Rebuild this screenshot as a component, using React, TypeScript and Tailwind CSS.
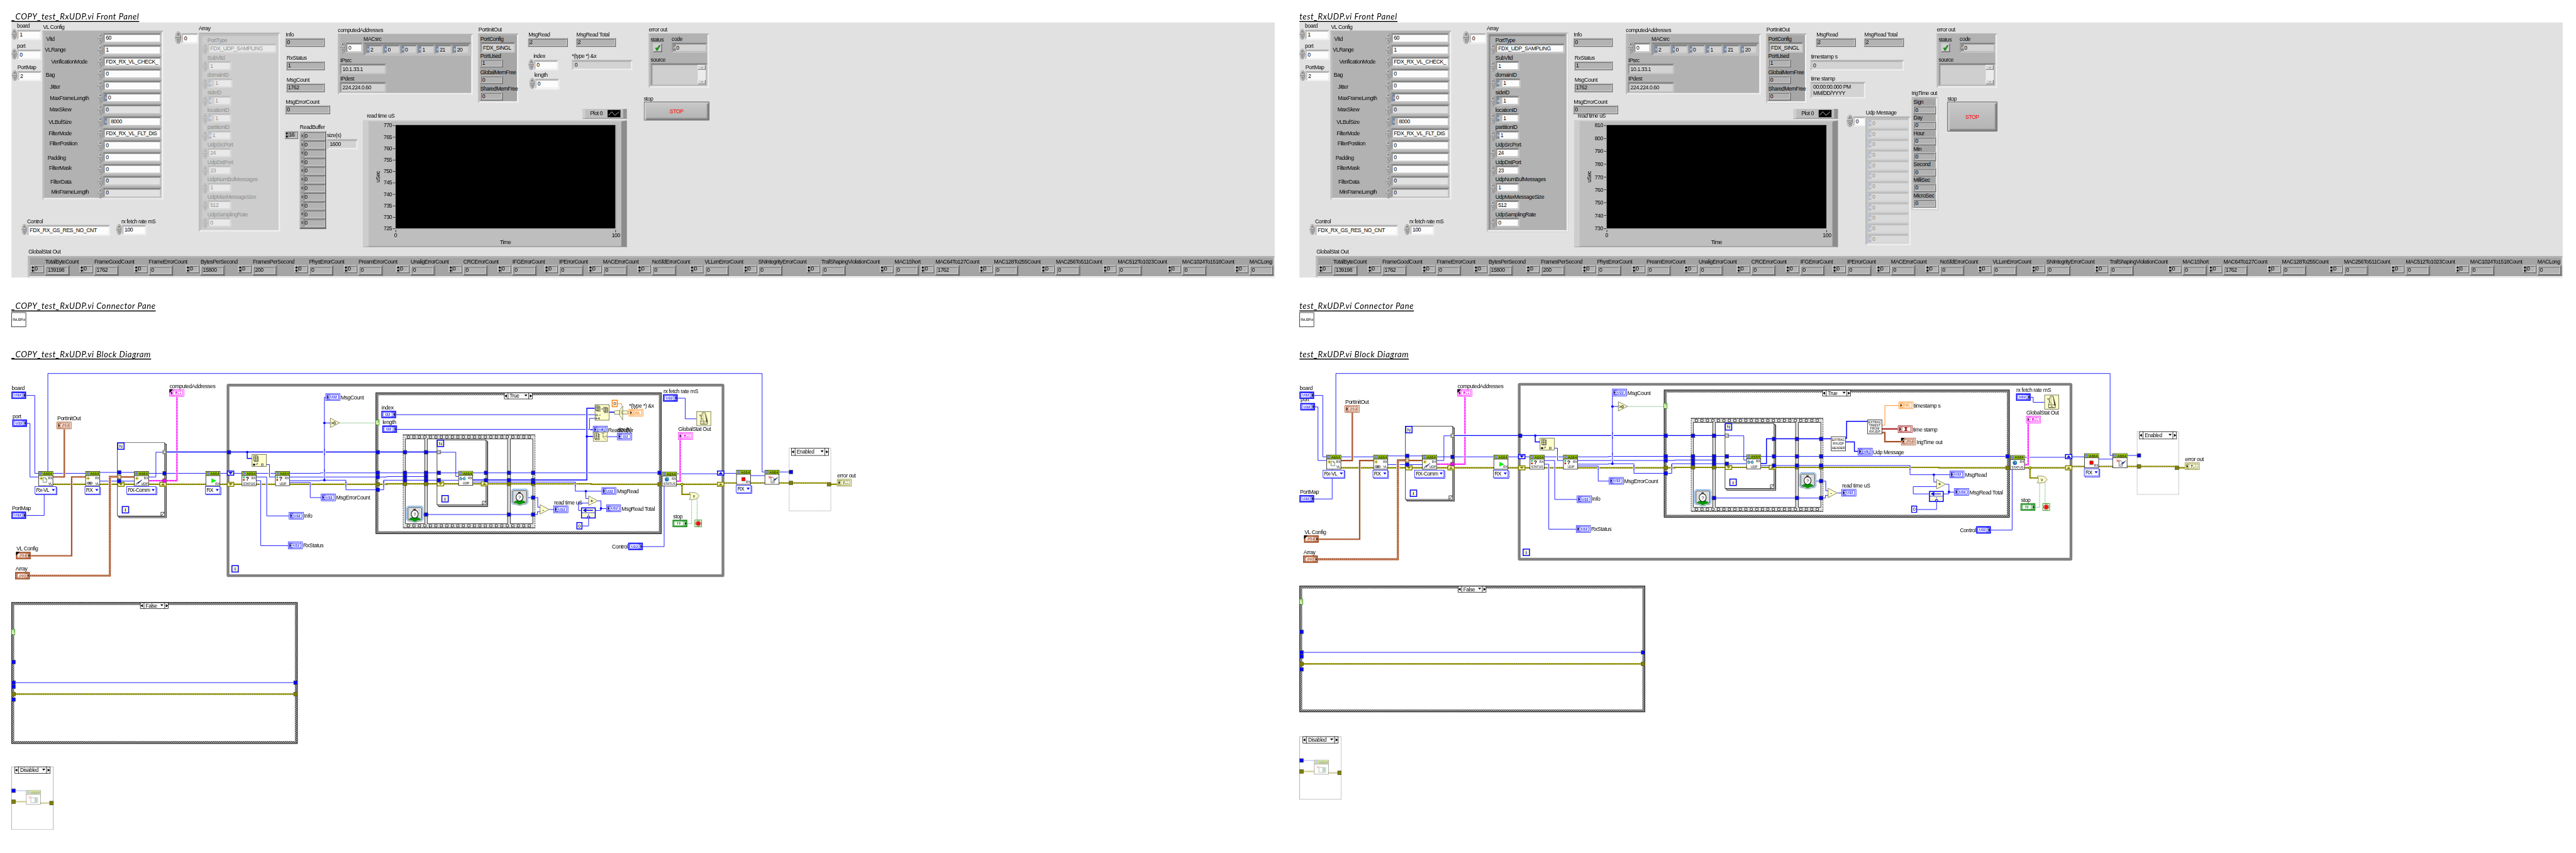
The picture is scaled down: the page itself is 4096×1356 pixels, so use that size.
import { Fragment, type ReactNode } from "react";

/* ---------------------------------------------------------------- */
/* Front panel widgets                                                */
/* ---------------------------------------------------------------- */

function Label({ at, children, dim }: { at: string; children: ReactNode; dim?: boolean }) {
  return (
    <span className={`absolute whitespace-nowrap leading-[14px] ${dim ? "text-[#8f8f8f]" : "text-black"} ${at}`}>
      {children}
    </span>
  );
}

function Spinner({ className = "", dim }: { className?: string; dim?: boolean }) {
  return (
    <svg viewBox="0 0 12 24" preserveAspectRatio="none" className={`shrink-0 ${dim ? "opacity-40" : ""} ${className}`}>
      <ellipse cx="6" cy="12" rx="5.6" ry="11.6" fill="#7d7d7d" />
      <ellipse cx="5.4" cy="11.6" rx="4.8" ry="10.9" fill="#c4c4c4" />
      <path d="M1 11.5h10M1 12.8h10" stroke="#6a6a6a" strokeWidth="0.7" />
      <path d="M4 8.5L6 4L8 8.5" fill="none" stroke="#333" strokeWidth="0.9" />
      <path d="M4 15.5h4L6 20z" fill="#eee" stroke="#333" strokeWidth="0.8" />
    </svg>
  );
}

const frames = {
  panel: "border-t-[#b0b0b0] border-l-[#c4c4c4] border-r-[#efefef] border-b-[#efefef]",
  cluster: "border-t-[#828282] border-l-[#999999] border-r-[#c2c2c2] border-b-[#c2c2c2]",
  dim: "border-t-[#bdbdbd] border-l-[#c6c6c6] border-r-[#d6d6d6] border-b-[#d6d6d6]",
};

const fills = {
  white: "bg-[#fcfcfc]",
  gray: "bg-[#d3d3d3]",
  light: "bg-[#e1e1e1]",
  dim: "bg-[#e9e9e9]",
  faint: "bg-[#dadada]",
};

type FieldProps = {
  at?: string;
  children?: ReactNode;
  frame?: keyof typeof frames;
  fill?: keyof typeof fills;
  radix?: string;
  gap?: boolean;
};

function Field({ at = "", children, frame = "panel", fill = "white", radix, gap }: FieldProps) {
  const dim = frame === "dim";
  return (
    <div className={`flex items-stretch border-4 border-r-[3px] border-b-[3px] ${frames[frame]} ${fills[fill]} ${at}`}>
      {radix && (
        <span
          className={`-ml-px flex w-[6px] shrink-0 items-center justify-center text-[8px] text-white ${dim ? "bg-[#b4bccb]" : "bg-[#7688a6]"}`}
        >
          {radix}
        </span>
      )}
      {gap && <span className={`w-[6px] shrink-0 ${dim ? "bg-[#d0d0d0]" : "bg-[#b8b8b8]"}`} />}
      <span className={`flex items-center whitespace-nowrap pl-[2px] leading-[13px] ${dim ? "text-[#8f8f8f]" : "text-black"}`}>
        {children}
      </span>
    </div>
  );
}

function Indicator({ at = "", children }: { at?: string; children: ReactNode }) {
  return (
    <div className={`border border-t-[#d6d6d6] border-l-[#d6d6d6] border-r-[#4d4d4d] border-b-[#4d4d4d] bg-[#a6a6a6] p-px ${at}`}>
      <div className="flex h-full items-center border border-t-[#505050] border-l-[#505050] border-r-[#dcdcdc] border-b-[#dcdcdc] bg-[#b3b3b3] pl-px leading-[13px]">
        {children}
      </div>
    </div>
  );
}

function IndexBox({ at = "", children }: { at?: string; children: ReactNode }) {
  return (
    <div className={`flex h-[17px] w-[29px] items-stretch border border-t-[#d6d6d6] border-l-[#d6d6d6] border-r-[#4d4d4d] border-b-[#4d4d4d] bg-[#b3b3b3] ${at}`}>
      <svg viewBox="0 0 7 15" className="w-[7px] shrink-0">
        <path d="M3.5 1L6.5 5H4.6V6.5H2.4V5H.5zM3.5 14L.5 10H2.4V8.5H4.6V10H6.5z" fill="#000" />
      </svg>
      <span className="my-px mr-px flex flex-1 items-center border border-t-[#505050] border-l-[#505050] border-r-[#dcdcdc] border-b-[#dcdcdc] leading-[13px]">
        {children}
      </span>
    </div>
  );
}

function Cluster({ at, children, fill = "bg-[#b2b2b2]" }: { at: string; children?: ReactNode; fill?: string }) {
  return (
    <div className={`absolute border-4 border-t-[#b3b3b3] border-l-[#bdbdbd] border-r-[#efefef] border-b-[#efefef] ${fill} ${at}`}>
      {children}
    </div>
  );
}

type VlRow = { at: string; name: string; value: string; fill?: keyof typeof fills; radix?: string; gap?: boolean };

const vlRows: VlRow[] = [
  { at: "left-[4px] top-[7px]", name: "VlId", value: "60" },
  { at: "left-px top-[30px]", name: "VLRange", value: "1" },
  { at: "left-[15px] top-[57px]", name: "VerificationMode", value: "FDX_RX_VL_CHECK_" },
  { at: "left-[3px] top-[86px]", name: "Bag", value: "0" },
  { at: "left-[12px] top-[111px]", name: "Jitter", value: "0" },
  { at: "left-[12px] top-[137px]", name: "MaxFrameLength", value: "0", radix: "x" },
  { at: "left-[11px] top-[161px]", name: "MaxSkew", value: "0", fill: "light" },
  { at: "left-[9px] top-[189px]", name: "VLBufSize", value: "8000", radix: "x", gap: true },
  { at: "left-[9px] top-[213px]", name: "FilterMode", value: "FDX_RX_VL_FLT_DIS" },
  { at: "left-[11px] top-[235px]", name: "FilterPosition", value: "0" },
  { at: "left-[7px] top-[267px]", name: "Padding", value: "0" },
  { at: "left-[10px] top-[289px]", name: "FilterMask", value: "0" },
  { at: "left-[13px] top-[319px]", name: "FilterData", value: "0", fill: "light" },
  { at: "left-[15px] top-[341px]", name: "MinFrameLength", value: "0", fill: "light" },
];

function VlConfig() {
  return (
    <Cluster at="left-[68px] top-[18px] h-[369px] w-[264px]">
      {vlRows.map((r) => (
        <Label key={r.name} at={r.at}>
          {r.name}
        </Label>
      ))}
      <div className="ml-[116px] flex flex-col gap-[4px] pt-px">
        {vlRows.map((r) => (
          <div key={r.name} className="flex h-[22px]">
            <Spinner className="h-[24px] w-[12px]" />
            <Field at="w-[127px]" frame="cluster" fill={r.fill ?? "white"} radix={r.radix} gap={r.gap}>
              {r.value}
            </Field>
          </div>
        ))}
      </div>
    </Cluster>
  );
}

const arrayRows = [
  { name: "PortType", value: "FDX_UDP_SAMPLING", w: "w-[151px]" },
  { name: "SubVlId", value: "1", w: "w-[52px]" },
  { name: "domainID", value: "1", w: "w-[55px]", radix: "d", gap: true },
  { name: "sideID", value: "1", w: "w-[52px]", radix: "d", gap: true },
  { name: "locationID", value: "1", w: "w-[52px]", radix: "d", gap: true },
  { name: "partitionID", value: "1", w: "w-[52px]", radix: "b" },
  { name: "UdpSrcPort", value: "24", w: "w-[52px]" },
  { name: "UdpDstPort", value: "23", w: "w-[52px]" },
  { name: "UdpNumBufMessages", value: "1", w: "w-[52px]" },
  { name: "UdpMaxMessageSize", value: "512", w: "w-[52px]" },
  { name: "UdpSamplingRate", value: "0", w: "w-[52px]" },
];

function PortArray({ dim }: { dim?: boolean }) {
  return (
    <Cluster at="left-[409px] top-[22px] h-[435px] w-[178px]" fill={dim ? "bg-[#cdcdcd]" : "bg-[#b2b2b2]"}>
      <div
        className={`flex h-full flex-col border-4 border-b-2 pt-[2px] ${
          dim
            ? "border-t-[#bfbfbf] border-l-[#c3c3c3] border-r-[#cccccc] border-b-[#cccccc]"
            : "border-t-[#858585] border-l-[#8f8f8f] border-r-[#b0b0b0] border-b-[#b0b0b0]"
        }`}
      >
        {arrayRows.map((r) => (
          <div key={r.name} className="h-[38px] shrink-0">
            <div className={`pl-[11px] leading-[14px] ${dim ? "text-[#8f8f8f]" : "text-black"}`}>{r.name}</div>
            <div className="flex h-[21px]">
              <Spinner dim={dim} className="h-[24px] w-[11px]" />
              <Field at={r.w} frame={dim ? "dim" : "cluster"} fill={dim ? "dim" : "white"} radix={r.radix} gap={r.gap}>
                {r.value}
              </Field>
            </div>
          </div>
        ))}
      </div>
    </Cluster>
  );
}

const macBytes = ["2", "0", "0", "1", "21", "20"];

function ComputedAddresses() {
  return (
    <Cluster at="left-[713px] top-[25px] h-[133px] w-[295px]">
      <Label at="left-[52px] top-0">MACsrc</Label>
      <div className="absolute left-0 top-[12px] flex items-center">
        <Spinner className="h-[27px] w-[13px]" />
        <Field at="h-[22px] w-[37px]" frame="cluster">0</Field>
      </div>
      <div className="absolute left-[52px] top-[15px] flex h-[29px] w-[235px] items-center border-4 border-t-[#858585] border-l-[#9a9a9a] border-r-[#c0c0c0] border-b-[#c0c0c0] bg-[#a9a9a9]">
        {macBytes.map((b, i) => (
          <Field key={i} at="h-[21px] w-[38px]" frame="cluster" fill="gray" radix="x">
            {b}
          </Field>
        ))}
      </div>
      <Label at="left-px top-[47px]">IPsrc</Label>
      <Field at="absolute left-0 top-[61px] h-[23px] w-[101px]" frame="cluster" fill="gray">
        10.1.33.1
      </Field>
      <Label at="left-px top-[87px]">IPdest</Label>
      <Field at="absolute left-0 top-[101px] h-[23px] w-[101px]" frame="cluster" fill="gray">
        224.224.0.60
      </Field>
    </Cluster>
  );
}

function PortInitOut() {
  return (
    <Cluster at="left-[1019px] top-[24px] h-[152px] w-[89px] pl-px pt-px" fill="bg-[#a6a6a6]">
      <div className="leading-[14px]">PortConfig</div>
      <Field at="h-[23px] w-[76px]" frame="cluster" fill="gray">FDX_SINGL</Field>
      <div className="leading-[14px]">PortUsed</div>
      <Indicator at="h-[18px] w-[49px]">1</Indicator>
      <div className="mt-[4px] leading-[14px]">GlobalMemFree</div>
      <Indicator at="h-[18px] w-[49px]">0</Indicator>
      <div className="mt-[4px] whitespace-nowrap leading-[14px]">SharedMemFree</div>
      <Indicator at="h-[18px] w-[49px]">0</Indicator>
    </Cluster>
  );
}

function ErrorOut() {
  return (
    <>
      <Label at="left-[1392px] top-[9px]">error out</Label>
      <Cluster at="left-[1392px] top-[24px] h-[119px] w-[132px]">
        <Label at="left-0 top-[2px]">status</Label>
        <Label at="left-[46px] top-px">code</Label>
        <div className="absolute left-[5px] top-[17px] flex size-[20px] items-center justify-center border-2 border-t-[#c8c8c8] border-l-[#c8c8c8] border-r-[#6a6a6a] border-b-[#6a6a6a] bg-[#d0d0d0]">
          <svg viewBox="0 0 16 16" className="size-[15px]">
            <path d="M3 8.5L5 7.5L6.5 10L12 1.5L13.5 3L7 14H5.5z" fill="#00f000" stroke="#111" strokeWidth="1" />
          </svg>
        </div>
        <div className="absolute left-[46px] top-[16px] flex h-[22px] w-[78px] border-4 border-t-[#858585] border-l-[#999999] border-r-[#c0c0c0] border-b-[#c0c0c0] bg-[#d3d3d3]">
          <span className="flex w-[5px] items-center justify-center bg-[#808080] text-[8px] text-white">d</span>
          <span className="flex items-center pl-px leading-[13px]">0</span>
        </div>
        <Label at="left-0 top-[46px]">source</Label>
        <div className="absolute left-0 top-[61px] flex h-[50px] w-[124px] justify-end border-4 border-t-[#828282] border-l-[#999999] border-r-[#c0c0c0] border-b-[#c0c0c0] bg-[#cfcfcf]">
          <div className="flex w-[17px] flex-col justify-between bg-[#ececec]">
            <span className="flex h-[10px] items-center justify-center border border-r-[#555] border-b-[#555] border-l-white border-t-white bg-[#d6d6d6]">
              <svg viewBox="0 0 4 3" className="w-[4px]"><path d="M2 0L4 3H0z" fill="#777" /></svg>
            </span>
            <span className="flex h-[10px] items-center justify-center border border-r-[#555] border-b-[#555] border-l-white border-t-white bg-[#d6d6d6]">
              <svg viewBox="0 0 4 3" className="w-[4px]"><path d="M2 3L4 0H0z" fill="#777" /></svg>
            </span>
          </div>
        </div>
      </Cluster>
    </>
  );
}

function StopButton({ at }: { at: string }) {
  return (
    <button
      className={`absolute flex items-center justify-center border border-[#3c3c3c] bg-gradient-to-b from-[#c9c9c9] via-[#bdbdbd] to-[#b3b3b3] text-[#ff0000] shadow-[inset_4px_3px_0_#cdcdcd,inset_-4px_-4px_2px_#858585] ${at}`}
    >
      STOP
    </button>
  );
}

function Chart({ at, ticks }: { at: string; ticks: number[] }) {
  return (
    <div className={`absolute w-[576px] ${at}`}>
      <div className="flex items-end justify-between">
        <span className="pb-[3px] pl-[8px] leading-[14px]">read time uS</span>
        <div className="mb-[4px] flex h-[21px] w-[97px] items-center justify-end gap-[11px] border-b border-l-[6px] border-r-[8px] border-b-[#777] border-l-[#cfcfcf] border-r-[#939393] bg-[#bebebe] pr-[6px]">
          <span>Plot 0</span>
          <svg viewBox="0 0 28 16" className="h-[16px] w-[28px] bg-black">
            <path d="M2 12L9 4L16 12L25 4" fill="none" stroke="#fff" strokeWidth="1" />
          </svg>
        </div>
      </div>
      <div className="relative h-[276px] border-b border-l-[12px] border-r-[12px] border-t-2 border-b-[#6c6c6c] border-l-[#cdcdcd] border-r-[#8c8c8c] border-t-[#cfcfcf] bg-[#bebebe]">
        <div className="absolute left-[59px] top-[8px] h-[227px] w-[481px] border-b border-r border-[#efefef] bg-black" />
        <div className="absolute left-[26px] top-[2px] flex h-[239px] w-[32px] flex-col justify-between">
          {ticks.map((t) => (
            <span key={t} className="flex items-center justify-end gap-[2px] leading-[14px]">
              {t}
              <span className="h-px w-[5px] bg-black" />
            </span>
          ))}
        </div>
        <span className="absolute left-[8px] top-[114px] -rotate-90 leading-[14px]">uSec</span>
        <span className="absolute left-[59px] top-[237px] h-[5px] w-px bg-black" />
        <span className="absolute left-[539px] top-[237px] h-[5px] w-px bg-black" />
        <span className="absolute left-[56px] top-[242px] leading-[14px]">0</span>
        <span className="absolute left-[531px] top-[242px] leading-[14px]">100</span>
        <span className="absolute left-[287px] top-[257px] leading-[14px]">Time</span>
      </div>
    </div>
  );
}

const stats = [
  { w: "w-[107px]", name: "TotalByteCount", value: "139198" },
  { w: "w-[119px]", name: "FrameGoodCount", value: "1762" },
  { w: "w-[113px]", name: "FrameErrorCount", value: "0" },
  { w: "w-[114px]", name: "BytesPerSecond", value: "15800" },
  { w: "w-[123px]", name: "FramesPerSecond", value: "200" },
  { w: "w-[108px]", name: "PhysErrorCount", value: "0" },
  { w: "w-[114px]", name: "PreamErrorCount", value: "0" },
  { w: "w-[115px]", name: "UnaligErrorCount", value: "0" },
  { w: "w-[107px]", name: "CRCErrorCount", value: "0" },
  { w: "w-[102px]", name: "IFGErrorCount", value: "0" },
  { w: "w-[96px]", name: "IPErrorCount", value: "0" },
  { w: "w-[107px]", name: "MACErrorCount", value: "0" },
  { w: "w-[115px]", name: "NoSfdErrorCount", value: "0" },
  { w: "w-[117px]", name: "VLLenErrorCount", value: "0" },
  { w: "w-[138px]", name: "SNIntegrityErrorCount", value: "0" },
  { w: "w-[160px]", name: "TrafShapingViolationCount", value: "0" },
  { w: "w-[89px]", name: "MAC1Short", value: "0" },
  { w: "w-[128px]", name: "MAC64To127Count", value: "1762" },
  { w: "w-[135px]", name: "MAC128To255Count", value: "0" },
  { w: "w-[135px]", name: "MAC256To511Count", value: "0" },
  { w: "w-[141px]", name: "MAC512To1023Count", value: "0" },
  { w: "w-[147px]", name: "MAC1024To1518Count", value: "0" },
  { w: "w-[88px]", name: "MACLong", value: "0" },
];

function GlobalStat() {
  return (
    <>
      <Label at="left-[37px] top-[494px]">GlobalStat Out</Label>
      <div className="absolute left-[36px] right-0 top-[510px] flex h-[48px] overflow-hidden border-b-4 border-l-4 border-r-2 border-t-4 border-b-[#efefef] border-l-[#bdbdbd] border-r-[#efefef] border-t-[#b3b3b3] bg-[#a4a4a4] pl-[2px]">
        {stats.map((s) => (
          <div key={s.name} className={`shrink-0 pt-px ${s.w}`}>
            <div className="ml-[32px] whitespace-nowrap leading-[14px]">{s.name}</div>
            <div className="mt-px flex gap-[2px]">
              <IndexBox>0</IndexBox>
              <div className="h-[23px] w-[54px] border border-t-[#d6d6d6] border-l-[#d6d6d6] border-r-[#4d4d4d] border-b-[#4d4d4d] p-px">
                <Indicator at="h-full">{s.value}</Indicator>
              </div>
            </div>
          </div>
        ))}
      </div>
    </>
  );
}

function FrontPanel({ children }: { children: ReactNode }) {
  return (
    <section className="relative ml-[25px] h-[557px] w-[2759px] overflow-hidden bg-[#e1e1e1]">
      <Label at="left-[12px] top-px">board</Label>
      <Spinner className="absolute left-0 top-[14px] h-[24px] w-[12px]" />
      <Field at="absolute left-[12px] top-[16px] h-[22px] w-[53px]">1</Field>
      <Label at="left-[12px] top-[44px]">port</Label>
      <Spinner className="absolute left-0 top-[57px] h-[24px] w-[12px]" />
      <Field at="absolute left-[12px] top-[59px] h-[22px] w-[53px]">0</Field>
      <Label at="left-[13px] top-[91px]">PortMap</Label>
      <Spinner className="absolute left-px top-[104px] h-[24px] w-[12px]" />
      <Field at="absolute left-[13px] top-[106px] h-[22px] w-[53px]">2</Field>

      <Label at="left-[69px] top-[3px]">VL Config</Label>
      <VlConfig />

      <Label at="left-[409px] top-[6px]">Array</Label>
      <Spinner className="absolute left-[357px] top-[19px] h-[28px] w-[14px]" />
      <Field at="absolute left-[371px] top-[23px] h-[23px] w-[37px]">0</Field>

      <Label at="left-[599px] top-[20px]">Info</Label>
      <Indicator at="absolute left-[598px] top-[34px] h-[19px] w-[86px]">0</Indicator>
      <Label at="left-[601px] top-[71px]">RxStatus</Label>
      <Indicator at="absolute left-[600px] top-[85px] h-[19px] w-[84px]">1</Indicator>
      <Label at="left-[601px] top-[119px]">MsgCount</Label>
      <Indicator at="absolute left-[600px] top-[133px] h-[19px] w-[84px]">1762</Indicator>
      <Label at="left-[599px] top-[167px]">MsgErrorCount</Label>
      <Indicator at="absolute left-[598px] top-[181px] h-[19px] w-[98px]">0</Indicator>

      <Label at="left-[713px] top-[10px]">computedAddresses</Label>
      <ComputedAddresses />
      <Label at="left-[1020px] top-[8px]">PortInitOut</Label>
      <PortInitOut />

      <Label at="left-[1129px] top-[20px]">MsgRead</Label>
      <Indicator at="absolute left-[1128px] top-[34px] h-[19px] w-[87px]">2</Indicator>
      <Label at="left-[1234px] top-[20px]">MsgRead Total</Label>
      <Indicator at="absolute left-[1233px] top-[34px] h-[19px] w-[87px]">2</Indicator>
      <ErrorOut />

      <Label at="left-[34px] top-[427px]">Control</Label>
      <Spinner className="absolute left-[22px] top-[440px] h-[24px] w-[12px]" />
      <Field at="absolute left-[34px] top-[442px] h-[24px] w-[181px]">FDX_RX_GS_RES_NO_CNT</Field>
      <Label at="left-[240px] top-[427px]">rx fetch rate mS</Label>
      <Spinner className="absolute left-[229px] top-[440px] h-[24px] w-[12px]" />
      <Field at="absolute left-[241px] top-[442px] h-[22px] w-[53px]">100</Field>

      {children}
      <GlobalStat />
    </section>
  );
}

function CopyPanel() {
  return (
    <FrontPanel>
      <PortArray dim />
      <Label at="left-[630px] top-[222px]">ReadBuffer</Label>
      <IndexBox at="absolute left-[597px] top-[237px]">16</IndexBox>
      <div className="absolute left-[629px] top-[237px] h-[214px] w-[58px] border-2 border-t-[#c8c8c8] border-l-[#c8c8c8] border-r-[#5a5a5a] border-b-[#5a5a5a] bg-[#a6a6a6]">
        {Array.from({ length: 11 }, (_, i) => (
          <div key={i} className="flex h-[19px] items-center border-b border-[#7c7c7c] pl-[2px]">
            <span className="w-[6px] text-[9px]">x</span>
            <span className="flex h-[16px] flex-1 items-center border border-t-[#505050] border-l-[#505050] border-r-[#dcdcdc] border-b-[#dcdcdc] bg-[#b3b3b3]">
              0
            </span>
          </div>
        ))}
      </div>
      <Label at="left-[689px] top-[240px]">size(s)</Label>
      <Field at="absolute left-[689px] top-[255px] h-[22px] w-[67px]" fill="gray">1600</Field>
      <Label at="left-[1140px] top-[67px]">index</Label>
      <Spinner className="absolute left-[1129px] top-[80px] h-[24px] w-[12px]" />
      <Field at="absolute left-[1141px] top-[82px] h-[22px] w-[53px]">0</Field>
      <Label at="left-[1142px] top-[108px]">length</Label>
      <Spinner className="absolute left-[1131px] top-[121px] h-[24px] w-[12px]" />
      <Field at="absolute left-[1143px] top-[123px] h-[22px] w-[53px]">0</Field>
      <Label at="left-[1224px] top-[67px]">*(type *) &amp;x</Label>
      <Field at="absolute left-[1224px] top-[82px] h-[22px] w-[132px]" fill="gray">0</Field>
      <Label at="left-[1381px] top-[160px]">stop</Label>
      <StopButton at="left-[1381px] top-[173px] h-[41px] w-[143px]" />
      <Chart at="left-[768px] top-[189px]" ticks={[770, 765, 760, 755, 750, 745, 740, 735, 730, 725]} />
    </FrontPanel>
  );
}

const irig = ["Sign", "Day", "Hour", "Min", "Second", "MilliSec", "MicroSec"];

function TestPanel() {
  return (
    <FrontPanel>
      <PortArray />
      <Label at="left-[1117px] top-[68px]">timestamp s</Label>
      <Field at="absolute left-[1116px] top-[82px] h-[23px] w-[204px]" fill="gray">0</Field>
      <Label at="left-[1117px] top-[116px]">time stamp</Label>
      <div className="absolute left-[1116px] top-[130px] h-[36px] w-[120px] border-4 border-r-[3px] border-b-[3px] border-t-[#b0b0b0] border-l-[#c4c4c4] border-r-[#efefef] border-b-[#efefef] bg-[#d3d3d3] pl-[2px] pt-px leading-[13px]">
        <div>00:00:00.000 PM</div>
        <div>MM/DD/YYYY</div>
      </div>
      <Label at="left-[1337px] top-[148px]">IrigTime out</Label>
      <Cluster at="left-[1337px] top-[163px] h-[245px] w-[57px]" fill="bg-[#a6a6a6]">
        {irig.map((n) => (
          <div key={n} className="h-[34px]">
            <div className="leading-[15px]">{n}</div>
            <Indicator at="h-[18px] w-[49px]">0</Indicator>
          </div>
        ))}
      </Cluster>
      <Label at="left-[1237px] top-[190px]">Udp Message</Label>
      <Spinner className="absolute left-[1195px] top-[201px] h-[28px] w-[14px]" />
      <Field at="absolute left-[1209px] top-[205px] h-[22px] w-[28px]">0</Field>
      <Cluster at="left-[1236px] top-[205px] h-[282px] w-[99px]" fill="bg-[#cbcbcb]">
        {Array.from({ length: 12 }, (_, i) => (
          <div key={i} className="h-[23px]">
            <Field at="h-[21px] w-full" frame="dim" fill="faint" radix="x">0</Field>
          </div>
        ))}
      </Cluster>
      <Label at="left-[1415px] top-[160px]">stop</Label>
      <StopButton at="left-[1415px] top-[173px] h-[65px] w-[109px]" />
      <Chart at="left-[600px] top-[189px]" ticks={[810, 800, 790, 780, 770, 760, 750, 740, 730]} />
    </FrontPanel>
  );
}

/* ---------------------------------------------------------------- */
/* Block diagram primitives                                           */
/* ---------------------------------------------------------------- */

const BLUE = "#0000ff";
const OLIVE = "#808000";
const BROWN = "#993300";
const PINK = "#ff00ff";
const ORANGE = "#ff8000";
const GREEN = "#008000";

function Txt({ x, y, children, c = "#000" }: { x: number; y: number; children: string; c?: string }) {
  return (
    <text x={x} y={y + 4} fill={c} className="text-[12px] tracking-[-0.55px]">
      {children}
    </text>
  );
}

function Tiny({ x, y, children, c = "#000", s = 7 }: { x: number; y: number; children: string; c?: string; s?: number }) {
  return (
    <text x={x} y={y} fill={c} fontSize={s} textAnchor="middle" letterSpacing="0">
      {children}
    </text>
  );
}

function Wire({ d, w = 1, c = BLUE }: { d: string; w?: number; c?: string }) {
  return <path d={d} fill="none" stroke={c} strokeWidth={w === 1 ? 1.2 : w} />;
}

function ErrWire({ d, dim }: { d: string; dim?: boolean }) {
  return (
    <g fill="none" opacity={dim ? 0.4 : 1}>
      <path d={d} stroke={OLIVE} strokeWidth="3" />
      <path d={d} stroke="#ffff00" strokeWidth="1" />
      <path d={d} stroke="#000" strokeWidth="1" strokeDasharray="2 2" />
    </g>
  );
}

function Woven({ d, c, w = 3, dash = "1 1" }: { d: string; c: string; w?: number; dash?: string }) {
  return (
    <g fill="none">
      <path d={d} stroke={c} strokeWidth={w} />
      <path d={d} stroke="#fff" strokeWidth={w - 2} strokeDasharray={dash} opacity="0.85" />
    </g>
  );
}

/* A white break where a vertical wire passes over horizontal ones. */
function Gap({ x, y, w = 5, h = 5 }: { x: number; y: number; w?: number; h?: number }) {
  return <rect x={x - w / 2} y={y - h / 2} width={w} height={h} fill="#fff" />;
}

function Dot({ x, y, c = BLUE }: { x: number; y: number; c?: string }) {
  return <circle cx={x} cy={y} r="2.6" fill={c} />;
}

function Tunnel({ x, y, c = BLUE }: { x: number; y: number; c?: string }) {
  return <rect x={x + 0.5} y={y + 0.5} width="8" height="8" fill={c} stroke="#4d4d33" strokeWidth="1" />;
}

function AutoIndex({ x, y, c = BLUE }: { x: number; y: number; c?: string }) {
  return (
    <g>
      <rect x={x + 0.5} y={y + 0.5} width="8" height="7.5" fill="#ffffcc" stroke="#4d4d33" />
      <path d={`M${x + 3.6} ${y + 2}h-1.3v4.6h1.3M${x + 5.4} ${y + 2}h1.3v4.6h-1.3`} fill="none" stroke={c} strokeWidth="0.9" />
    </g>
  );
}

function ShiftReg({ x, y, c, up }: { x: number; y: number; c: string; up?: boolean }) {
  return (
    <g>
      <rect x={x + 1} y={y + 1} width="14" height="9" fill="#ffffcc" stroke={c} strokeWidth="2" />
      <path d={up ? `M${x + 3} ${y + 8}h10l-5-5z` : `M${x + 3} ${y + 3}h10l-5 5z`} fill={c} />
    </g>
  );
}

type TermProps = { x: number; y: number; c?: string; t?: string; ind?: boolean; strict?: boolean };

function Term({ x, y, c = BLUE, t = "U32", ind, strict }: TermProps) {
  const cx = x + (ind ? 18 : 14);
  return (
    <g>
      <rect x={x} y={y} width="32" height="16" fill="#fff" />
      {ind ? (
        <rect x={x + 0.5} y={y + 0.5} width="31" height="15" fill="none" stroke={c} />
      ) : (
        <rect x={x + 1} y={y + 1} width="30" height="14" fill="none" stroke={c} strokeWidth="2" />
      )}
      <rect x={x + 3.5} y={y + 3} width="25" height="10" fill="none" stroke={c} />
      {t === "cluster" && (
        <g fill={c}>
          <path d={`M${cx - 5} ${y + 5}h4v3h-4zM${cx + 1} ${y + 5}h2v1h-2zM${cx + 5} ${y + 4}h1v3h-1z`} />
          <path d={`M${cx - 5} ${y + 9}h3v2h-3zM${cx} ${y + 9}h3v2h-3zM${cx + 5} ${y + 8.5}h2v2.5h-2z`} />
        </g>
      )}
      {t === "array" && (
        <path
          d={`M${x + 7} ${y + 4.5}h-2v7h2M${cx - 5} ${y + 6}h4v2.5h-4v2h4M${cx + 1} ${y + 6}h2v4.5h-2zM${cx + 5} ${y + 6}h3v4.5h-3z`}
          fill="none"
          stroke={c}
          strokeWidth="0.9"
        />
      )}
      {t === "mixed" && (
        <path
          d={`M${cx - 6} ${y + 5.5}h4v2.5h-4v2.5h4M${cx} ${y + 5.5}h2.6v5h-2.6zM${cx + 5} ${y + 5.5}h3v5h-3v-2.5h3`}
          fill="none"
          stroke={c}
          strokeWidth="1"
        />
      )}
      {t === "hourglass" && (
        <path d={`M${cx - 4} ${y + 4.5}h7M${cx - 4} ${y + 11.5}h7M${cx - 3} ${y + 5}h5l-2 3l2 3h-5l2-3z`} fill={c} stroke={c} strokeWidth="0.8" />
      )}
      {!["cluster", "array", "mixed", "hourglass"].includes(t) && (
        <text x={cx} y={y + 10.8} fontSize="7.6" fontWeight="700" fill={c} textAnchor="middle" letterSpacing="0.3">
          {t}
        </text>
      )}
      <rect x={ind ? x + 2 : x + 22} y={y + 2} width="8" height="12" fill={c} opacity="0.32" />
      <path d={ind ? `M${x + 4} ${y + 5}v6l3-3z` : `M${x + 27} ${y + 5}v6l3-3z`} fill="#000" />
      {strict && <path d={`M${x} ${y}h8L${x} ${y + 8}z`} fill="#000" />}
    </g>
  );
}

type IconKind = "create" | "link" | "udp" | "play" | "query" | "read" | "globe" | "stop" | "close" | "closeDim";

function Star() {
  return (
    <g strokeWidth="1.1">
      <path d="M6 11v9M1.5 15.5h9" stroke="#c7b900" />
      <path d="M2.5 12l7 7M9.5 12l-7 7" stroke="#e8dc00" />
      <path d="M6 13v5M3.5 15.5h5" stroke="#333" strokeWidth="0.6" />
    </g>
  );
}

function Glyph({ kind }: { kind: IconKind }) {
  switch (kind) {
    case "create":
      return (
        <>
          <Star />
          <path d="M10 14h5l3 3v7h-8zM15 14v3h3" fill="#fff" stroke="#2a4f2a" strokeWidth="0.9" />
        </>
      );
    case "link":
      return (
        <>
          <Star />
          <g fill="none" stroke="#333" strokeWidth="1.2">
            <ellipse cx="7" cy="26" rx="3.4" ry="2.4" />
            <ellipse cx="12" cy="26" rx="3.4" ry="2.4" />
            <path d="M6 26h7" />
          </g>
        </>
      );
    case "udp":
      return (
        <>
          <Star />
          <path d="M17.5 18.5L9 27l-2-2z" fill="#2233aa" stroke="#112" strokeWidth="0.6" />
          <path d="M3 29l4-5l3 3z" fill="#9aa" stroke="#444" strokeWidth="0.6" />
        </>
      );
    case "play":
      return <path d="M13 16v9.5l10-4.7z" fill="#00ff00" stroke="#3a9a3a" strokeWidth="0.5" />;
    case "query":
      return (
        <>
          <circle cx="4.6" cy="13.5" r="2" fill="#00cc33" />
          <circle cx="4.6" cy="19" r="2" fill="#dd1100" />
          <text x="12.3" y="20.5" fontSize="12" fontWeight="700" textAnchor="middle" letterSpacing="0">?</text>
        </>
      );
    case "read":
      return (
        <g stroke="#114" strokeWidth="0.8">
          <circle cx="5.5" cy="17" r="2.6" fill="#66e5e5" />
          <circle cx="13" cy="17" r="2.6" fill="#66e5e5" />
          <path d="M3 15.5l3-4M11 15.5l4-4M8 17q1.2-1.6 2.4 0" fill="none" />
        </g>
      );
    case "globe":
      return (
        <>
          <circle cx="10.5" cy="16.5" r="4.6" fill="#2266cc" />
          <path d="M9 13q3-1.5 5 1.5q0 3-2.5 5q-2-1-1-3.5z" fill="#33bb55" />
          <path d="M6.5 14.5q1-1.6 2.4-1.6" stroke="#cfe8ff" fill="none" />
        </>
      );
    case "stop":
      return <rect x="12" y="16.5" width="7.5" height="7.5" fill="#ff0000" stroke="#333" strokeWidth="0.7" />;
    case "close":
      return (
        <>
          <path d="M8.5 13.5l5 5M13.5 13.5l-5 5" stroke="#ff0000" strokeWidth="1.3" />
          <path d="M14 16h4l3 3v9h-7z" fill="#fff" stroke="#222" strokeWidth="0.9" />
          <path d="M29 16l-7 7.5l-3-2z" fill="#1a2a99" stroke="#112" strokeWidth="0.5" />
          <path d="M16 26l4-5l2.4 2z" fill="#9ab" stroke="#555" strokeWidth="0.4" />
        </>
      );
    case "closeDim":
      return (
        <>
          <path d="M5.5 13.5l5 5M10.5 13.5l-5 5" stroke="#ff0000" strokeWidth="1.3" />
          <rect x="17" y="16" width="9" height="12" fill="#5f9f6f" opacity="0.9" />
          <path d="M10.5 16.5h6l3 3v8h-9z" fill="#fff" stroke="#222" strokeWidth="0.9" />
        </>
      );
  }
}

function Icon({ x, y, kind, a, b, dim }: { x: number; y: number; kind: IconKind; a?: string; b?: string; dim?: boolean }) {
  return (
    <g transform={`translate(${x} ${y})`} opacity={dim ? 0.42 : 1}>
      <rect x="0.5" y="0.5" width="31" height="31" fill="#fff" stroke="#000" />
      <rect x="1" y="1" width="30" height="8" fill="#99cc00" />
      <path d="M0 9.5h32" stroke="#000" />
      <path d="M5.5 1L9 4.8L5.5 8.6L2 4.8z" fill="#dfe8ff" stroke="#1111cc" strokeWidth="0.9" />
      <path d="M5.5 3L7.2 4.8L5.5 6.6L3.8 4.8z" fill="#3333cc" />
      <text x="10.3" y="7.9" fontSize="8" letterSpacing="0.3" fill="#000">A664</text>
      <Glyph kind={kind} />
      {a && <Tiny x={26} y={17.5}>{a}</Tiny>}
      {b && <Tiny x={b === "RX" || b === "VL" ? 26 : b === "UDP" ? (kind === "udp" ? 23 : 17) : 16} y={29.5}>{b}</Tiny>}
    </g>
  );
}

function TextNode({ x, y, lines }: { x: number; y: number; lines: string[] }) {
  const step = 28 / lines.length;
  return (
    <g>
      <rect x={x + 0.5} y={y + 0.5} width="31" height="31" fill="#fff" stroke="#000" />
      {lines.map((l, i) => (
        <Tiny key={l} x={x + 16} y={y + 2 + step * i + step / 2 + 2.5} s={6.9}>
          {l}
        </Tiny>
      ))}
    </g>
  );
}

function Poly({ x, y, w, children }: { x: number; y: number; w: number; children: string }) {
  return (
    <g>
      <rect x={x + 2.5} y={y + 2.5} width={w} height="16" fill="#fff" stroke={BLUE} />
      <rect x={x + 0.5} y={y + 0.5} width={w} height="16" fill="#fff" stroke={BLUE} />
      <text x={x + 3} y={y + 12.5} fontSize="11.5" letterSpacing="-0.75">
        {children}
      </text>
      <path d={`M${x + w - 9} ${y + 6}h7l-3.5 4.5z`} fill={BLUE} />
    </g>
  );
}

function Selector({ x, y, w, h = 14, children }: { x: number; y: number; w: number; h?: number; children: string }) {
  const m = y + h / 2;
  return (
    <g>
      <rect x={x + 0.5} y={y + 0.5} width={w - 1} height={h - 1} fill="#fff" stroke="#000" />
      <path d={`M${x + 8.5} ${y}v${h}M${x + w - 8.5} ${y}v${h}`} stroke="#000" />
      <path d={`M${x + 6} ${m - 3.5}v7l-5-3.5zM${x + w - 6} ${m - 3.5}v7l5-3.5zM${x + w - 18} ${m - 3}h7l-3.5 4z`} />
      <text x={x + 12} y={m + 4} fontSize="11.5" letterSpacing="-0.6">
        {children}
      </text>
    </g>
  );
}

function Corner({ x, y, glyph }: { x: number; y: number; glyph: "N" | "i" }) {
  return (
    <g>
      <rect x={x + 1} y={y + 1} width="14" height="14" fill="#ffffcc" stroke={BLUE} strokeWidth="2" />
      <text x={x + 8} y={y + 12} fontSize="11" fontWeight={glyph === "i" ? 700 : 400} textAnchor="middle" fill={BLUE} letterSpacing="0">
        {glyph}
      </text>
    </g>
  );
}

function ForLoop({ x, y, w, h }: { x: number; y: number; w: number; h: number }) {
  return (
    <g fill="#fff" stroke="#000">
      <rect x={x + 4.5} y={y + 4.5} width={w} height={h} />
      <rect x={x + 2.5} y={y + 2.5} width={w} height={h} />
      <rect x={x + 0.5} y={y + 0.5} width={w} height={h} />
      <path d={`M${x + w - 7.5} ${y + h + 0.5}v-8h8z`} />
    </g>
  );
}

function CaseFrame({ x, y, w, h }: { x: number; y: number; w: number; h: number }) {
  return (
    <g fill="none">
      <rect x={x + 3} y={y + 3} width={w - 6} height={h - 6} stroke="url(#weave)" strokeWidth="6" />
      <rect x={x + 0.5} y={y + 0.5} width={w - 1} height={h - 1} stroke="#000" />
    </g>
  );
}

function CaseInput({ x, y }: { x: number; y: number }) {
  return (
    <g>
      <rect x={x + 0.5} y={y + 0.5} width="7" height="11" fill="#ffffcc" stroke={GREEN} />
      <Tiny x={x + 4} y={y + 9} c={GREEN} s={9}>?</Tiny>
    </g>
  );
}

function Tri({ x, y, children, s = 11 }: { x: number; y: number; children: string; s?: number }) {
  return (
    <g>
      <path d={`M${x + 0.5} ${y}L${x + 20.5} ${y + 10.3}L${x + 0.5} ${y + 20.5}z`} fill="#ffffcc" stroke="#66664d" strokeWidth="1.1" />
      <text x={x + 7} y={y + 14} fontSize={s} fontWeight="700" textAnchor="middle" fill="#333322" letterSpacing="-0.5">
        {children}
      </text>
    </g>
  );
}

function GridGlyph({ x, y, s = 9 }: { x: number; y: number; s?: number }) {
  return (
    <g fill="#ffffcc" stroke="#222" strokeWidth="0.9">
      <rect x={x + 2} y={y + 2} width={s} height={s + 3} />
      <rect x={x} y={y} width={s} height={s + 3} />
      <path d={`M${x + s / 2} ${y}v${s + 3}M${x} ${y + (s + 3) / 3}h${s}M${x} ${y + ((s + 3) * 2) / 3}h${s}`} />
    </g>
  );
}

function Timer({ x, y }: { x: number; y: number }) {
  return (
    <g transform={`translate(${x} ${y})`}>
      <path d="M4 1h30l3 3v27l-3 3h-6q-9 5-18 0h-6l-3-3v-27z" fill="#cfe6fb" stroke="#4488dd" strokeWidth="1" />
      <rect x="4" y="4" width="30" height="27" rx="1.5" fill="#dcdcdc" stroke="#222" />
      <path d="M6 29l13-6.5L32 29l-13 6z" fill="#009900" stroke="#063" strokeWidth="0.4" />
      <path d="M7 31v3M10 32v3M13 33v3M16 34v3M22 34v3M25 33v3M28 32v3M31 31v3" stroke="#a89a10" strokeWidth="1" />
      <rect x="16" y="7" width="5" height="3" fill="#333" />
      <ellipse cx="18.7" cy="18.5" rx="7.6" ry="8.5" fill="#fff" stroke="#111" strokeWidth="1.4" />
      <Tiny x={18.7} y={22.5} s={11}>?</Tiny>
    </g>
  );
}

function Metronome({ x, y }: { x: number; y: number }) {
  return (
    <g transform={`translate(${x} ${y})`}>
      <rect x="0.5" y="0.5" width="31" height="31" fill="#ffffcc" stroke="#4d4d33" />
      <path d="M13 3h6l5 20v5H9v-4z" fill="#ffffcc" stroke="#333322" strokeWidth="1" />
      <path d="M19 3l6 19l-3 3l-3-19z" fill="#444433" />
      <path d="M8 22h14M9 28h13M16 24v2M14 25h4" stroke="#333322" strokeWidth="0.9" />
      <path d="M15.5 5v15" stroke="#333322" strokeDasharray="1 1.5" />
      <path d="M7 7l9 15M6 10l5-2" stroke="#333322" strokeWidth="0.9" />
    </g>
  );
}

function Const({ x, y, c }: { x: number; y: number; c: string }) {
  return (
    <g>
      <rect x={x + 1} y={y + 1} width="11" height="14" fill="#fff" stroke={c} strokeWidth="2" />
      <Tiny x={x + 6.5} y={y + 12} s={11}>0</Tiny>
    </g>
  );
}

/* ---------------------------------------------------------------- */
/* Block diagram sections                                             */
/* ---------------------------------------------------------------- */

function InitSection({ dy, loopX }: { dy: number; loopX: number }) {
  const Y = (n: number) => n + dy;
  return (
    <g>
      {/* horizontal links between the VIs */}
      <Wire d={`M116 ${Y(1033.5)}H187M218 ${Y(1031.5)}H256M265 ${Y(1031.5)}H293M218 ${Y(1050.5)}H256M265 ${Y(1050.5)}H293M325 ${Y(1033.5)}H355M363 ${Y(1033.5)}H449M481 ${Y(1033.5)}H${loopX}M${loopX + 15} ${Y(1033.5)}H528M560 ${Y(1033.5)}H601`} />
      <Gap x={140.5} y={Y(1033.5)} />
      <ErrWire d={`M116 ${Y(1057.5)}H187M218 ${Y(1057.5)}H256M271 ${Y(1057.5)}H293M325 ${Y(1057.5)}H349M363 ${Y(1057.5)}H449M481 ${Y(1057.5)}H${loopX}M${loopX + 15} ${Y(1057.5)}H528M560 ${Y(1057.5)}H601M633 ${Y(1057.5)}H821`} />
      <Gap x={156.5} y={Y(1057.5)} />
      <Gap x={240} y={Y(1054)} w={7} h={14} />
      <Gap x={386.5} y={Y(1033.5)} w={5} />
      <Gap x={569.5} y={Y(1057.5)} w={4} />
      <Gap x={582.5} y={Y(1057.5)} w={4} />
      <Gap x={588.5} y={Y(1033.5)} w={4} />

      {/* inputs */}
      <Wire d={`M57 863.5H76V${Y(1033.5)}H84`} />
      <Wire d={`M59 ${Y(924.5)}H65.5V${Y(1041.5)}H84`} />
      <Wire d={`M57 ${Y(1125.5)}H96.5V${Y(1061)}`} />
      <Woven d={`M116 ${Y(1041.5)}H140.5V${Y(937)}`} c={BROWN} />
      <Woven d={`M67 ${Y(1213.5)}H156.5V${Y(1041.5)}H187`} c={BROWN} />
      <Woven d={`M65 ${Y(1257)}H240V${Y(1041)}H256`} c={BROWN} w={4} />

      <Txt x={25.5} y={848}>board</Txt>
      <Txt x={27.5} y={Y(909)}>port</Txt>
      <Term x={25} y={855} />
      <Term x={27} y={Y(916)} />
      <Txt x={125} y={Y(914)}>PortInitOut</Txt>
      <Term x={124} y={Y(921)} c={BROWN} t="mixed" ind />
      <Txt x={26} y={Y(1110)}>PortMap</Txt>
      <Term x={25} y={Y(1117)} />
      <Txt x={36} y={Y(1198)}>VL Config</Txt>
      <Term x={35} y={Y(1205)} c={BROWN} t="mixed" strict />
      <Txt x={34} y={Y(1242)}>Array</Txt>
      <Term x={33} y={Y(1249)} c={BROWN} t="array" />

      {/* per-port configuration loop */}
      <ForLoop x={256} y={Y(966)} w={103} h={160} />
      <Wire d={`M265 ${Y(1031.5)}H293M265 ${Y(1050.5)}H293M325 ${Y(1033.5)}H355M325 ${Y(1041.5)}H340.5V${Y(987.5)}H355`} />
      <Woven d={`M265 ${Y(1041.5)}H293`} c={BROWN} />
      <ErrWire d={`M271 ${Y(1057.5)}H349`} />
      <Woven d={`M325 ${Y(1049.5)}H386.5V866`} c={PINK} dash="4 2" />
      <Gap x={386.5} y={Y(987)} />
      <Wire d={`M363 ${Y(987)}H821`} w={2} />
      <Corner x={256} y={Y(966)} glyph="N" />
      <Corner x={266} y={Y(1105)} glyph="i" />
      <ShiftReg x={256} y={Y(1052)} c={OLIVE} />
      <ShiftReg x={348} y={Y(1052)} c={OLIVE} up />
      <Tunnel x={256} y={Y(1027)} />
      <AutoIndex x={256} y={Y(1037)} c={BROWN} />
      <Tunnel x={256} y={Y(1046)} />
      <AutoIndex x={355} y={Y(983)} />
      <Tunnel x={355} y={Y(1029)} />
      <Tunnel x={355} y={Y(1045)} c={PINK} />
      <Txt x={370.5} y={843}>computedAddresses</Txt>
      <Term x={370} y={850} c={PINK} t="cluster" ind strict />

      <Icon x={84} y={Y(1029)} kind="create" a="RX" b="VL" />
      <Icon x={186.5} y={Y(1029)} kind="link" a="RX" b="VL" />
      <Icon x={293} y={Y(1029)} kind="udp" a="RX" b="UDP" />
      <Icon x={449} y={Y(1029)} kind="play" b="RX" />
      <Poly x={76} y={Y(1062)} w={46}>Rx-VL</Poly>
      <Poly x={185} y={Y(1062)} w={32}>RX</Poly>
      <Poly x={276} y={Y(1062)} w={64}>RX-Comm</Poly>
      <Poly x={448} y={Y(1062)} w={32}>RX</Poly>

      {/* acquisition status inside the while loop */}
      <Wire d={`M540 ${Y(987)}V${Y(1001)}H550`} w={2} />
      <Dot x={540} y={Y(987)} />
      <Wire d={`M582 ${Y(1014.5)}H588.5V${Y(1041.5)}H601M560 ${Y(1041.5)}H582.5V${Y(1126.5)}H631M560 ${Y(1049.5)}H569.5V${Y(1191.5)}H630`} />
      <rect x={550.5} y={Y(992.5)} width="31" height="26" fill="#ffffcc" stroke="#4d4d33" />
      <GridGlyph x={554} y={Y(995)} s={8} />
      <path d={`M553 ${Y(1013)}h4v3h-4zM559 ${Y(1015)}h1M561 ${Y(1015)}v-3h2`} stroke="#222" strokeWidth="0.8" />
      <rect x={571} y={Y(1012.5)} width="3.5" height="4" fill="none" stroke="#222" />
      <Tunnel x={loopX} y={Y(983)} />
      <ShiftReg x={loopX} y={Y(1027.5)} c={BLUE} />
      <ShiftReg x={loopX} y={Y(1052)} c={OLIVE} />
      <Icon x={528} y={Y(1029)} kind="query" a="RX" b="STATUS" />
      <Icon x={601} y={Y(1029)} kind="query" a="RX" b="UDP" />
      <Term x={631} y={Y(1118)} ind />
      <Txt x={664} y={Y(1126)}>Info</Txt>
      <Term x={629} y={Y(1183)} ind />
      <Txt x={662} y={Y(1191)}>RxStatus</Txt>
      <Corner x={loopX + 10} y={Y(1234)} glyph="i" />

      {/* message counters */}
      <Wire d={`M633 ${Y(1033.5)}H700V${Y(1032.5)}H821M633 ${Y(1041.5)}H821M633 ${Y(1049.5)}H700V${Y(1048.5)}H755.5V${Y(1069.5)}H821M633 ${Y(1053.5)}H677.5V${Y(1086.5)}H701`} />
      <Gap x={755.5} y={Y(1057.5)} w={4} />
      <Gap x={677.5} y={Y(1057.5)} w={4} />
      <Wire d={`M755.5 ${Y(1052)}V${Y(1062)}M677.5 ${Y(1054)}V${Y(1062)}`} />
      <Gap x={708.5} y={Y(987)} />
      <Gap x={708.5} y={Y(1036.5)} h={14} w={4} />
      <Term x={701} y={Y(1078)} ind />
      <Txt x={734} y={Y(1086.5)}>MsgErrorCount</Txt>
      <Tri x={721} y={Y(913)} s={10}>{">0"}</Tri>
      <path d={`M742 ${Y(923.5)}H821`} stroke={GREEN} strokeDasharray="1 1" />
      <Wire d={`M708.5 ${Y(923.5)}H721`} />
      <Dot x={708.5} y={Y(923.5)} />
      <Dot x={708.5} y={Y(1048.5)} />
    </g>
  );
}

function Sequence({ simple }: { simple: boolean }) {
  const holes = Array.from({ length: 23 }, (_, i) => 889.5 + i * 12);
  const cols = [880, 926, 1107, 1160];
  return (
    <g>
      <rect x="880.5" y="949.5" width="288" height="203" fill="#e0e0e0" stroke="#000" strokeDasharray="3 2" />
      <path d="M880 949.5H1169M880 1152.5H1169" stroke="#000" />
      {holes.map((h) => (
        <Fragment key={h}>
          <rect x={h} y="951.8" width="5" height="4.6" fill="#fff" stroke="#000" />
          <rect x={h} y="1145.7" width="5" height="4.6" fill="#fff" stroke="#000" />
        </Fragment>
      ))}
      <g fill="#fff" stroke="#000">
        <rect x="885.5" y="958.5" width="42" height="185" />
        <rect x="933.5" y="958.5" width="175" height="185" />
        <rect x="1114.5" y="958.5" width="49" height="185" />
      </g>
      <ForLoop x={954} y={960} w={107} h={142} />
      <Wire d="M829 987H954" w={2} />
      <Wire d="M829 1032.5H1169M829 1041.5H845V1040.5H926M829 1069.5H838V1048.5H1001M962 987.5H995.5V1040.5H1001" />
      <ErrWire d="M829 1057.5H840M840 1057.5H845V1056.5H1169" />
      <Gap x={838} y={1057.5} w={4} />
      <Wire d="M838 1050V1062" />
      {simple ? (
        <Wire d="M1033 1048H1169" w={2} />
      ) : (
        <Wire d="M1033 1048H1045V994H1169" w={2} />
      )}
      <Wire d="M1033 1052.5H1169M925 1123.5H1173.7V1117.5H1180M1154 1086.5H1174.5V1107.5H1180M1200 1112.5H1209" />
      <Corner x={954} y={960} glyph="N" />
      <Corner x={964} y={1081} glyph="i" />
      <ShiftReg x={954} y={1051} c={OLIVE} />
      <ShiftReg x={1050} y={1051} c={OLIVE} up />
      <AutoIndex x={954} y={983} />
      <Tunnel x={880} y={983} />
      <Tunnel x={926} y={983} />
      {cols.map((c) => (
        <Fragment key={c}>
          <Tunnel x={c} y={1052} c={OLIVE} />
          <Tunnel x={c} y={1028} />
          <Tunnel x={c} y={c > 1000 && !simple ? 1048 : 1044} />
        </Fragment>
      ))}
      <Tunnel x={880} y={1036} />
      <Tunnel x={926} y={1036} />
      {[926, 1107, 1160].map((c) => (
        <Tunnel key={c} x={c} y={1119} />
      ))}
      <Tunnel x={1160} y={1082} />
      <Tunnel x={954} y={1028} />
      <Tunnel x={954} y={1044} />
      <Tunnel x={1057} y={1028} />
      <Tunnel x={1057} y={simple ? 1044 : 1048} />
      {simple ? (
        <Tunnel x={1160} y={1048} />
      ) : (
        [1057, 1107, 1160].map((c) => <Tunnel key={c} x={c} y={990} />)
      )}
      <Icon x={1001} y={1028.5} kind="read" a="RX" b="UDP" />
      <Timer x={887} y={1104} />
      <Timer x={1116} y={1067} />
      <Tri x={1179} y={1102}>-</Tri>
      <Term x={1209} y={1104} ind />
      <Txt x={1210} y={1097}>read time uS</Txt>
      <CaseInput x={820.5} y={916} />
      <Tunnel x={820.5} y={983} />
      <Tunnel x={820.5} y={1028} />
      <Tunnel x={820.5} y={1037} />
      <Tunnel x={820.5} y={1053} c={OLIVE} />
      <Tunnel x={820.5} y={1065} />
    </g>
  );
}

/* Running message total: adder, feedback node and its initial value. */
function Accumulator({ far }: { far: boolean }) {
  const constX = far ? 1230 : 1259;
  const backX = far ? 1234.5 : 1263.5;
  return (
    <g>
      <Wire d={`M1279.5 1072.5V1088.5H1286M1306 1093.5H1312.5V1114.5H1300M1312.5 1110.5H1324M1269 1114.5H${backX}V1098.5H1286M${constX + 13} 1148.5H1285.5V1131`} />
      <Dot x={1279.5} y={1072.5} />
      <Dot x={1312.5} y={1110} />
      <Tri x={1285} y={1083}>+</Tri>
      <Term x={1314} y={1064} ind />
      <Txt x={1347.5} y={1073}>MsgRead</Txt>
      <Term x={1324} y={1102} ind />
      <Txt x={1357.5} y={1111}>MsgRead Total</Txt>
      <rect x="1270" y="1109" width="30" height="22" fill="#ffffcc" stroke={BLUE} strokeWidth="2" />
      <path d="M1270 1119.5h30" stroke={BLUE} />
      <path d="M1278 1114.3h17M1274.5 1114.3l5-3v6z" stroke={BLUE} strokeWidth="1.8" fill={BLUE} />
      <path d="M1285.5 1122v2M1283 1131v-3l2.5-2l2.5 2v3" stroke={BLUE} strokeWidth="1.4" fill="none" />
      <Const x={constX} y={1140} c={BLUE} />
    </g>
  );
}

/* Everything from the global status VI to the error output. */
function EndSection({ near }: { near: boolean }) {
  return (
    <g>
      {near ? <Wire d="M1480 869.5H1496.5V914.5H1521" /> : <Wire d="M1491 903.5H1496.5V914.5H1521" />}
      <Txt x={near ? 1449 : 1459.5} y={near ? 854 : 888}>rx fetch rate mS</Txt>
      <Term x={near ? 1448 : 1459} y={near ? 861 : 895} />
      <Metronome x={1521} y={898} />
      <Wire d="M1478 1034.5H1566M1582 1033.5H1608M1640 1038.5H1670M1702 1030.5H1723M1404 1193.5H1450.5V1061" />
      <ErrWire d="M1478 1057.5H1566M1489.5 1057.5V1079.5H1508M1582 1054.5H1608M1640 1054.5H1670M1702 1054.5H1806M1815 1057.5H1828" />
      <Gap x={1485.5} y={1034.5} />
      <Woven d="M1485.5 960V1050.5H1478" c={PINK} dash="4 2" />
      <circle cx="1489.5" cy="1057.5" r="2.6" fill="#ffff00" stroke="#000" />
      <Txt x={1481.5} y={937}>GlobalStat Out</Txt>
      <Term x={1481} y={944} c={PINK} t="cluster" ind />
      <Tunnel x={1436} y={1028} />
      <Tunnel x={1436} y={1053} c={OLIVE} />
      <Icon x={1446} y={1030} kind="globe" a="RX" b="STATUS" />
      <ShiftReg x={1566} y={1027.5} c={BLUE} up />
      <ShiftReg x={1566} y={1052} c={OLIVE} up />
      <path d="M1505.5 1075.5h9q8 0 12.5 7.5q-4.5 7.5-12.5 7.5h-9q5-7.5 0-15z" fill="#ffffcc" stroke="#66664d" />
      <Tiny x={1515.5} y={1086.5} s={9.5}>v</Tiny>
      <path d="M1501 1143.5H1510.5V1091M1522.5 1135V1088" fill="none" stroke={GREEN} strokeDasharray="1 1" />
      <Txt x={1470} y={1128}>stop</Txt>
      <Term x={1469} y={1135} c={GREEN} t="TF" />
      <rect x="1517.5" y="1135.5" width="15" height="15" fill="#ffffcc" stroke={GREEN} />
      <circle cx="1525" cy="1143" r="5.8" fill="#fff" stroke="#000" strokeWidth="0.8" />
      <circle cx="1525" cy="1143" r="4.4" fill="#ff0000" />
      <Txt x={1336.5} y={1194}>Control</Txt>
      <Term x={1372} y={1185} />
      <Icon x={1608} y={1026} kind="stop" b="RX" />
      <Poly x={1607.5} y={1059} w={32}>RX</Poly>
      <Icon x={1670} y={1026} kind="close" />
      <rect x="1723.5" y="978.5" width="91" height="137" fill="none" stroke="#808080" strokeDasharray="2 1.5" />
      <Selector x={1728} y={978} w={82} h={17}>Enabled</Selector>
      <Tunnel x={1723} y={1026} />
      <Tunnel x={1723} y={1050} c={OLIVE} />
      <Tunnel x={1806} y={1053} c={OLIVE} />
      <Txt x={1828.5} y={1039}>error out</Txt>
      <Term x={1828} y={1046} c={OLIVE} t="cluster" ind />
    </g>
  );
}

function WhileLoop({ x, y, r, b }: { x: number; y: number; r: number; b: number }) {
  return <rect x={x + 3} y={y + 3} width={r - x - 6} height={b - y - 6} rx="1" fill="none" stroke="#808080" strokeWidth="6" />;
}

function FalseCase({ y, w, h, sx, rows, top }: { y: number; w: number; h: number; sx: number; rows: number[]; top: number }) {
  const [a, b, c, e, f] = rows;
  return (
    <g>
      <CaseFrame x={25} y={y} w={w} h={h} />
      <Selector x={sx} y={y + 0.5} w={62}>False</Selector>
      <Wire d={`M34 ${b + 4.5}H${25 + w - 9}`} />
      <ErrWire d={`M34 ${e + 4.5}H${25 + w - 9}`} />
      <CaseInput x={25} y={top} />
      <Tunnel x={25} y={a} />
      <Tunnel x={25} y={b} />
      <Tunnel x={25} y={c} />
      <Tunnel x={25} y={e} c={OLIVE} />
      <Tunnel x={25} y={f} />
      <Tunnel x={25 + w - 9} y={b} />
      <Tunnel x={25 + w - 9} y={e} c={OLIVE} />
    </g>
  );
}

function DisabledCase({ dy }: { dy: number }) {
  return (
    <g transform={`translate(0 ${dy})`}>
      <rect x="25.5" y="1674.5" width="91" height="137" fill="none" stroke="#999" />
      <Selector x={32} y={1674} w={78} h={15}>Disabled</Selector>
      <path d="M34 1726.5H57" stroke="#8f8fff" />
      <ErrWire d="M34 1750.5H57M89 1753.5H108" dim />
      <Tunnel x={25} y={1722} />
      <Tunnel x={25} y={1746} c={OLIVE} />
      <Tunnel x={108} y={1749} c={OLIVE} />
      <Icon x={57} y={1725} kind="closeDim" dim />
    </g>
  );
}

function DiagramCanvas({ children }: { children: ReactNode }) {
  return (
    <svg viewBox="0 790 2813 1072" className="block h-[1072px] w-[2813px]">
      <defs>
        <pattern id="weave" width="2" height="2" patternUnits="userSpaceOnUse">
          <rect width="2" height="2" fill="#fff" />
          <rect width="1" height="1" fill="#000" />
          <rect x="1" y="1" width="1" height="1" fill="#000" />
        </pattern>
      </defs>
      {children}
    </svg>
  );
}

function CopyDiagram() {
  return (
    <DiagramCanvas>
      <WhileLoop x={495} y={838} r={1582} b={1260} />
      <Wire d="M104.5 1029V815.5H1664.5V1030.5H1670" />
      <Wire d="M708.5 1048.5V867.5H712" />
      <CaseFrame x={820.5} y={857} w={624.5} h={309} />
      <Selector x={1101} y={857.5} w={62}>True</Selector>
      <InitSection dy={0} loopX={495.5} />
      <Wire d="M708.5 980V994M708.5 1025V1050" />
      <Term x={711} y={859} ind />
      <Txt x={744} y={868}>MsgCount</Txt>

      <Wire d="M865 905.5H1299M867 937.5H1287.5V913.5H1299M1327 953.5H1348M1169 1032.5H1436M1169 1052.5H1256.5V1072.5H1314" />
      <ErrWire d="M1169 1056.5H1291.5V1057.5H1436" />
      <Gap x={1256.5} y={1057} w={4} />
      <Wire d="M1256.5 1053V1062" />
      <Gap x={1281.7} y={1032.5} />
      <Gap x={1281.7} y={905.5} />
      <Gap x={1281.7} y={937.5} />
      <Wire d="M1169 1048H1281.7V891.5H1299M1331 900H1342M1289 938H1295M1281.7 953H1295" w={2} />
      <Dot x={1281.7} y={953} />
      <Sequence simple />
      <Txt x={833.5} y={890}>index</Txt>
      <Term x={833} y={897} t="I32" />
      <Txt x={835.5} y={922}>length</Txt>
      <Term x={835} y={929} t="I32" />

      <rect x="1299.5" y="883.5" width="31" height="34" fill="#ffffcc" stroke="#4d4d33" />
      <GridGlyph x={1301.5} y={886} s={7} />
      <GridGlyph x={1318.5} y={889} s={7} />
      <path d="M1313.5 893h3M1315 891.5v3M1301 905h4v3h-4zM1307 907.5h1M1309.5 907.5h1v-3M1301.5 911v5M1309 911v5M1301.5 913.5h7.5M1303 912v3M1307.5 912v3" fill="none" stroke="#222" strokeWidth="0.9" />
      <Wire d="M1349 881.5H1357.5V886" c={ORANGE} />
      <Const x={1336} y={873} c={ORANGE} />
      <path d="M1342 897.5q1-1 3-1h8.5v8h-11.5zM1353.5 896.5L1360 886v31l-6.5-10zM1358 897h13q2 3.5 0 7h-13z" fill="#ffffcc" stroke="#66664d" />
      <Txt x={1374} y={886}>*(type *) &amp;x</Txt>
      <Term x={1373} y={893} c={ORANGE} t="DBL" ind />
      <Term x={1295} y={930} t="[U8]" ind />
      <rect x="1295.5" y="943.5" width="31" height="20" fill="#ffffcc" stroke="#66664d" />
      <GridGlyph x={1298} y={946} s={9} />
      <path d="M1314 946h6M1317 946v9M1317 953h7M1317 955l6 5M1324 951v4" fill="none" stroke="#444" strokeWidth="0.8" />
      <Txt x={1328} y={939.5}>ReadBuffer</Txt>
      <Txt x={1348} y={938.5}>size(s)</Txt>
      <Term x={1348} y={945} t="I32" ind />
      <Accumulator far={false} />
      <EndSection near />

      <FalseCase y={1315} w={625} h={309} sx={306} rows={[1441, 1486, 1495, 1511, 1523]} top={1374} />
      <DisabledCase dy={0} />
    </DiagramCanvas>
  );
}

function TestDiagram() {
  return (
    <DiagramCanvas>
      <WhileLoop x={502} y={836} r={1713} b={1224} />
      <Wire d="M104.5 993V815.5H1795.5V994.5H1801" />
      <Wire d="M708.5 1012.5V857" />
      <CaseFrame x={821} y={851} w={755} h={279} />
      <Selector x={1167} y={851.5} w={62}>True</Selector>
      <InitSection dy={-36} loopX={502.5} />
      <Wire d="M708.5 944V958M708.5 989V1014" />
      <Term x={708} y={849} ind />
      <Txt x={741.5} y={858}>MsgCount</Txt>

      <Wire d="M1169 996.5H1567M1169 1016.5H1358.5V1036.5H1445" />
      <ErrWire d="M1169 1020.5H1421.5V1021.5H1567" />
      <Gap x={1358.5} y={1021} w={4} />
      <Wire d="M1358.5 1017V1026" />
      <g transform="translate(0 -36)">
        <Sequence simple={false} />
      </g>
      <Wire d="M1169 958H1187M1218 957H1220V920H1266M1218 965H1237V985.5H1245" w={2} />
      <TextNode x={1186} y={953} lines={["EXTRAC", "RXUDP", "HEADER"]} />
      <Wire d="M1297 928.5H1303.5V885.5H1334" c={ORANGE} />
      <Woven d="M1297 936.5H1332" c="#990000" />
      <Woven d="M1297 944.5H1303.5V964.5H1339" c={BROWN} />
      <TextNode x={1265.5} y={916} lines={["EXTRAC", "TIMEST", "FROM", "RXUDP"]} />
      <Term x={1334} y={877} c={ORANGE} t="DBL" ind />
      <Txt x={1366.5} y={885.5}>timestamp s</Txt>
      <Term x={1332} y={929} c="#990000" t="hourglass" ind />
      <Txt x={1365} y={938.5}>time stamp</Txt>
      <Term x={1339} y={956} c={BROWN} t="mixed" ind strict />
      <Txt x={1373} y={965.5}>IrigTime out</Txt>
      <Term x={1244.5} y={978} t="[U8]" ind />
      <Txt x={1277.5} y={987.5}>Udp Message</Txt>
      <g transform="translate(131 -36)">
        <Accumulator far />
        <EndSection near={false} />
      </g>

      <FalseCase y={1279} w={755} h={276} sx={371} rows={[1375, 1420, 1429, 1445, 1457]} top={1308} />
      <DisabledCase dy={-66} />
    </DiagramCanvas>
  );
}

/* ---------------------------------------------------------------- */
/* Page                                                               */
/* ---------------------------------------------------------------- */

function Title({ className, children }: { className: string; children: ReactNode }) {
  return (
    <h2 className={`ml-[25px] flex items-end ${className}`}>
      <span className="whitespace-nowrap border-b-2 border-black font-[Lato,sans-serif] text-[18px] italic leading-[19px] tracking-[0.8px]">
        {children}
      </span>
    </h2>
  );
}

function Column({ name, panel, diagram }: { name: string; panel: ReactNode; diagram: ReactNode }) {
  return (
    <div className="h-[1862px] w-[2813px] overflow-hidden">
      <Title className="h-[48px]">{name} Front Panel</Title>
      <div className="pt-px">{panel}</div>
      <Title className="h-[74px]">{name} Connector Pane</Title>
      <div className="ml-[25px] mt-[2px] flex size-[32px] items-center justify-center border border-black text-[7.5px]">RxUDP.vi</div>
      <Title className="h-[71px]">{name} Block Diagram</Title>
      <div className="pt-[5px]">{diagram}</div>
    </div>
  );
}

export default function App() {
  return (
    <main className="h-[1356px] w-[4096px] overflow-hidden bg-white">
      <div className="grid h-[1862px] w-[5626px] origin-top-left scale-[0.72805] grid-cols-2 font-['Liberation_Sans',Arial,sans-serif] text-[12px] tracking-[-0.62px] text-black">
        <Column name="_COPY_test_RxUDP.vi" panel={<CopyPanel />} diagram={<CopyDiagram />} />
        <Column name="test_RxUDP.vi" panel={<TestPanel />} diagram={<TestDiagram />} />
      </div>
    </main>
  );
}
